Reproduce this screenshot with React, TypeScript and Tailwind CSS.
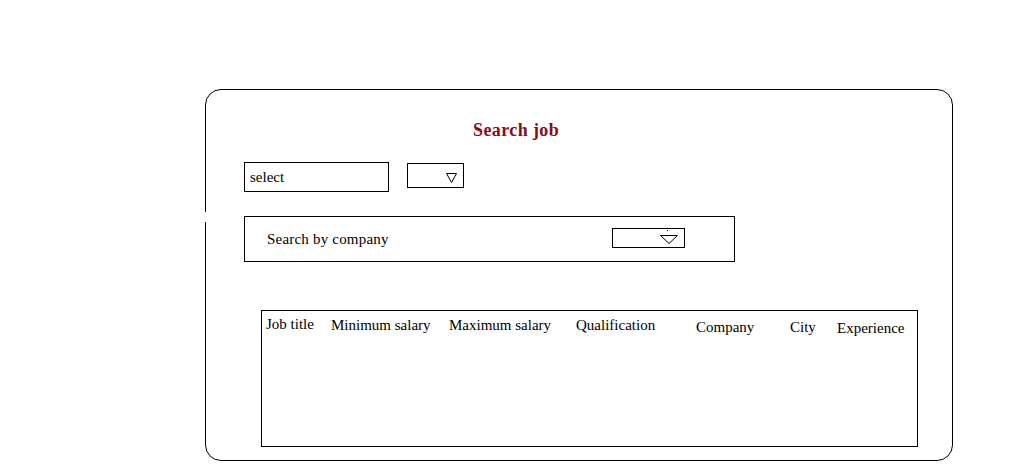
import React from "react";

const serif = { fontFamily: '"Liberation Serif", "Times New Roman", serif' };

function SmallTri() {
  return (
    <svg width="11" height="10" viewBox="0 0 11 10" className="block">
      <path d="M0.5 0.5 L10.5 0.5 L5.5 9.5 Z" fill="none" stroke="#000" strokeWidth="1" />
    </svg>
  );
}

function WideTri() {
  return (
    <svg width="18" height="16" viewBox="0 0 18 16" className="block">
      <rect x="7" y="0" width="1" height="1" fill="#000" />
      <path d="M0.5 5.5 L17.5 5.5 L9 13.5 Z" fill="none" stroke="#000" strokeWidth="1" />
    </svg>
  );
}

const cols: { label: string; w: string; mt: string }[] = [
  { label: "Job title", w: "w-[69px] pl-[4px]", mt: "mt-[4px]" },
  { label: "Minimum salary", w: "w-[118px]", mt: "mt-[5px]" },
  { label: "Maximum salary", w: "w-[127px]", mt: "mt-[5px]" },
  { label: "Qualification", w: "w-[120px]", mt: "mt-[5px]" },
  { label: "Company", w: "w-[94px]", mt: "mt-[7px]" },
  { label: "City", w: "w-[47px]", mt: "mt-[7px]" },
  { label: "Experience", w: "flex-1", mt: "mt-[8px]" },
];

export default function App() {
  return (
    <div className="w-[1023px] h-[475px] bg-white text-black overflow-hidden" style={serif}>
      <div className="pt-[89px] pl-[205px]">
        <div className="relative w-[748px] h-[372px] rounded-[16px] border border-black">
          <div className="absolute left-[-2px] top-[122px] w-[4px] h-[10px] bg-white" />
          <div className="mt-[30px] ml-[267px] text-[18px] leading-[20px] tracking-[0.4px] font-bold text-[#8b0a1e]">
            Search job
          </div>
          <div className="mt-[22px] flex items-start">
            <div className="ml-[38px] w-[145px] h-[30px] border border-black flex items-center pl-[5px] text-[15px]">
              select
            </div>
            <div className="ml-[18px] mt-[1px] w-[57px] h-[25px] border border-black flex items-center justify-end pr-[6px] pt-[4px]">
              <SmallTri />
            </div>
          </div>
          <div className="mt-[24px] ml-[38px] w-[491px] h-[46px] border border-black flex items-center">
            <span className="pl-[22px] text-[15px] tracking-[0.2px]">Search by company</span>
            <div className="ml-auto mr-[49px] -mt-[2px] w-[73px] h-[20px] border border-black flex items-start justify-end pr-[6px] pt-[1px]">
              <WideTri />
            </div>
          </div>
          <div className="mt-[48px] ml-[55px] w-[657px] h-[137px] border border-black flex items-start">
            {cols.map((c) => (
              <div key={c.label} className={`${c.w} ${c.mt} text-[15px] leading-[18px] whitespace-nowrap`}>
                {c.label}
              </div>
            ))}
          </div>
        </div>
      </div>
    </div>
  );
}
